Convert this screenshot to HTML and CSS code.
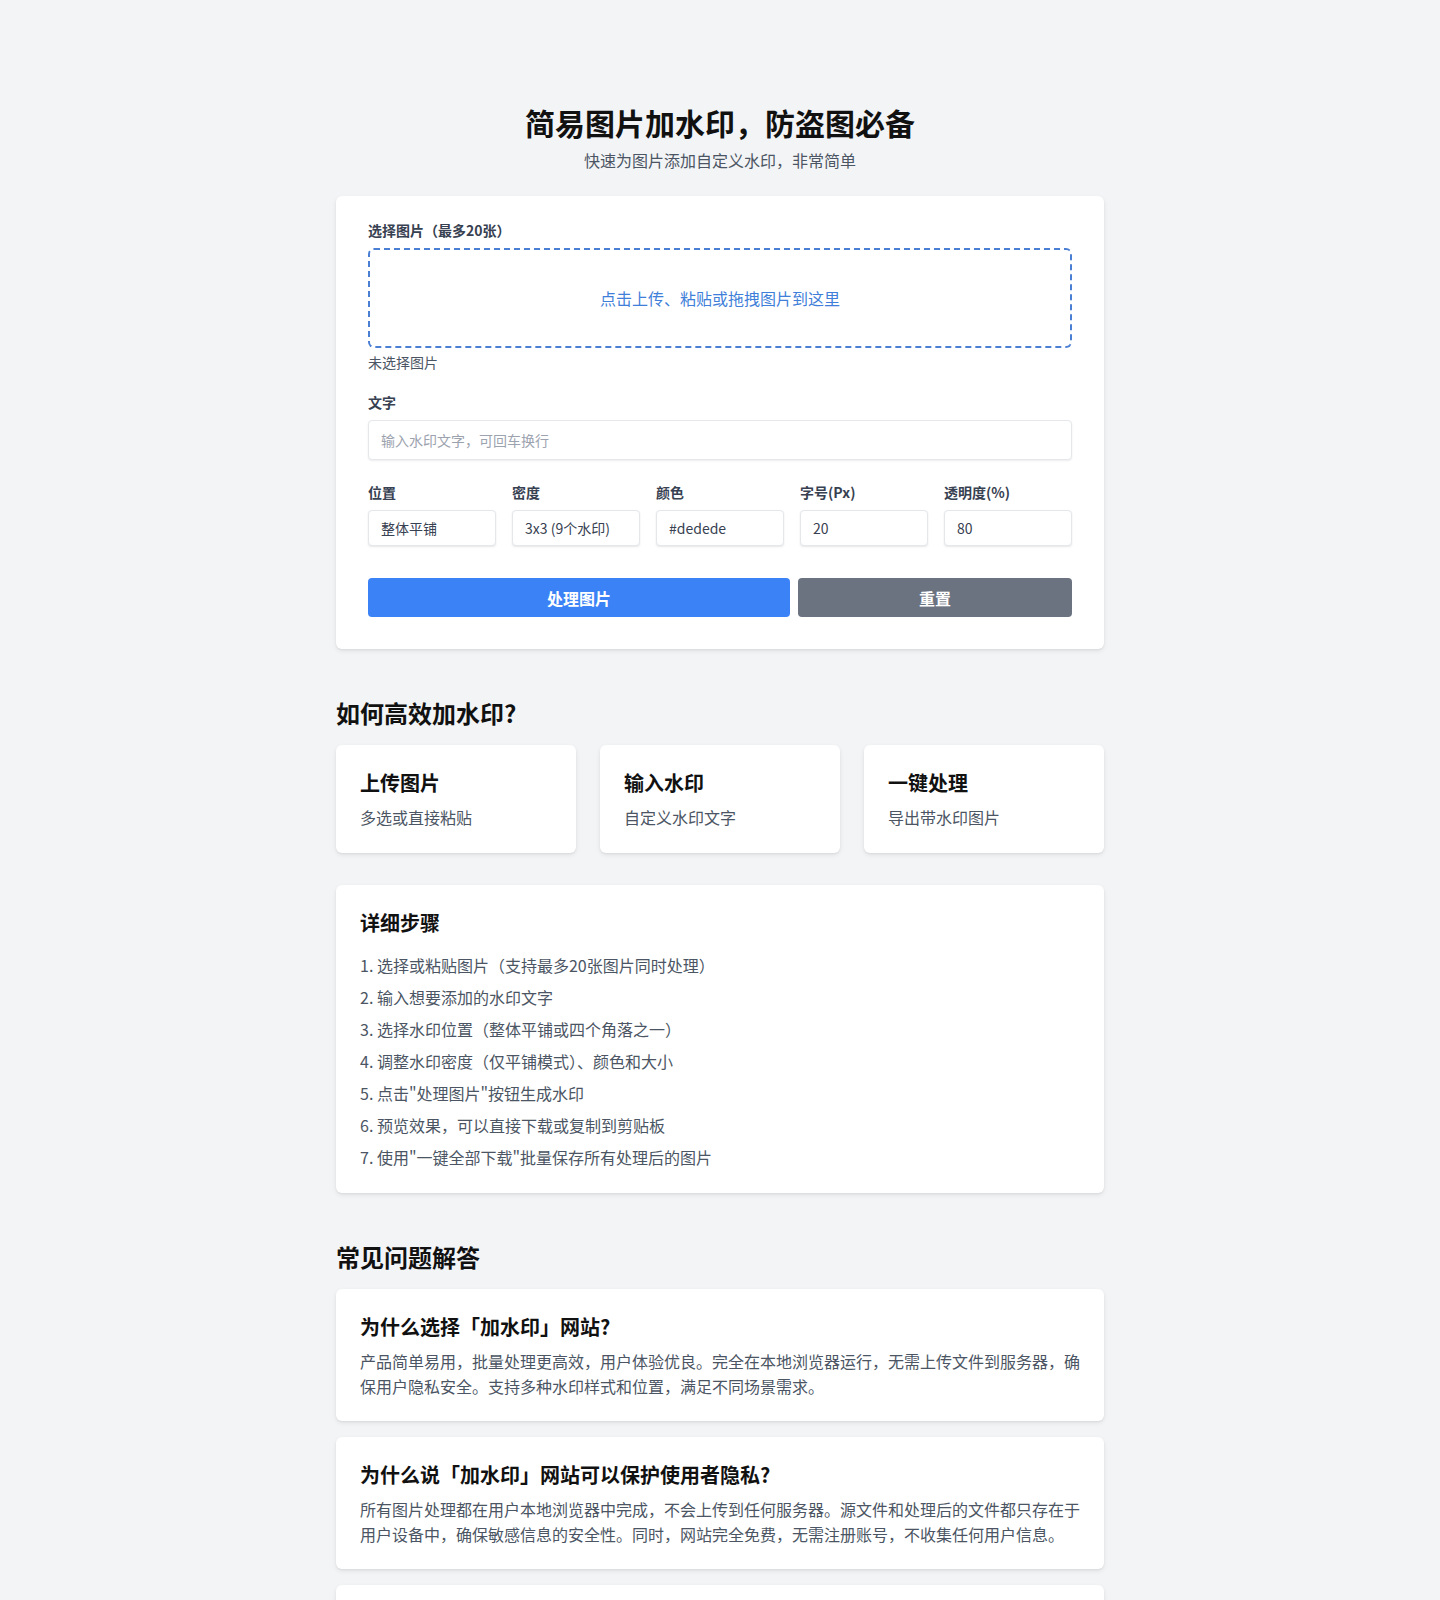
FILE: index.html
```html
<!DOCTYPE html>
<html lang="zh-CN">
<head>
<meta charset="utf-8">
<title>简易图片加水印，防盗图必备</title>
<link rel="stylesheet" href="styles.css">
</head>
<body>
<main class="page">
  <header class="hero">
    <h1 class="hero-title">简易图片加水印，防盗图必备</h1>
    <p class="hero-sub">快速为图片添加自定义水印，非常简单</p>
  </header>

  <section class="card tool">
    <label class="field-label">选择图片（最多20张）</label>
    <div class="dropzone">点击上传、粘贴或拖拽图片到这里</div>
    <p class="file-status">未选择图片</p>

    <label class="field-label text-label">文字</label>
    <input class="text-input" type="text" placeholder="输入水印文字，可回车换行">

    <div class="options">
      <div class="option">
        <label class="field-label">位置</label>
        <select class="small-input"><option>整体平铺</option></select>
      </div>
      <div class="option">
        <label class="field-label">密度</label>
        <select class="small-input"><option>3x3 (9个水印)</option></select>
      </div>
      <div class="option">
        <label class="field-label">颜色</label>
        <input class="small-input" type="text" value="#dedede">
      </div>
      <div class="option">
        <label class="field-label">字号(Px)</label>
        <input class="small-input" type="text" value="20">
      </div>
      <div class="option">
        <label class="field-label">透明度(%)</label>
        <input class="small-input" type="text" value="80">
      </div>
    </div>

    <div class="actions">
      <button class="btn btn-primary">处理图片</button>
      <button class="btn btn-secondary">重置</button>
    </div>
  </section>

  <h2 class="section-title">如何高效加水印?</h2>
  <div class="steps-grid">
    <div class="card mini">
      <h3 class="card-title">上传图片</h3>
      <p class="card-desc">多选或直接粘贴</p>
    </div>
    <div class="card mini">
      <h3 class="card-title">输入水印</h3>
      <p class="card-desc">自定义水印文字</p>
    </div>
    <div class="card mini">
      <h3 class="card-title">一键处理</h3>
      <p class="card-desc">导出带水印图片</p>
    </div>
  </div>

  <section class="card detail">
    <h3 class="card-title">详细步骤</h3>
    <ol class="step-list">
      <li>1. 选择或粘贴图片（支持最多20张图片同时处理）</li>
      <li>2. 输入想要添加的水印文字</li>
      <li>3. 选择水印位置（整体平铺或四个角落之一）</li>
      <li>4. 调整水印密度（仅平铺模式）、颜色和大小</li>
      <li>5. 点击"处理图片"按钮生成水印</li>
      <li>6. 预览效果，可以直接下载或复制到剪贴板</li>
      <li>7. 使用"一键全部下载"批量保存所有处理后的图片</li>
    </ol>
  </section>

  <h2 class="section-title">常见问题解答</h2>
  <div class="faq-list">
    <div class="card faq">
      <h3 class="card-title">为什么选择「加水印」网站?</h3>
      <p class="faq-text">产品简单易用，批量处理更高效，用户体验优良。完全在本地浏览器运行，无需上传文件到服务器，确保用户隐私安全。支持多种水印样式和位置，满足不同场景需求。</p>
    </div>
    <div class="card faq">
      <h3 class="card-title">为什么说「加水印」网站可以保护使用者隐私?</h3>
      <p class="faq-text">所有图片处理都在用户本地浏览器中完成，不会上传到任何服务器。源文件和处理后的文件都只存在于用户设备中，确保敏感信息的安全性。同时，网站完全免费，无需注册账号，不收集任何用户信息。</p>
    </div>
    <div class="card faq faq-more"></div>
  </div>
</main>
</body>
</html>
```

FILE: styles.css
```css
* { box-sizing: border-box; }

body {
  margin: 0;
  background: #f3f4f6;
  font-family: "Noto Sans CJK SC", "Noto Sans", sans-serif;
  color: #111827;
}

.page {
  width: 768px;
  margin: 0 auto;
  padding: 102px 0 40px;
}

.hero { text-align: center; }

.hero-title {
  margin: 0;
  font-size: 30px;
  line-height: 40px;
  font-weight: 700;
  color: #111;
}

.hero-sub {
  margin: 6px 0 0;
  font-size: 16px;
  line-height: 24px;
  color: #4b5563;
}

.card {
  background: #fff;
  border-radius: 6px;
  box-shadow: 0 2px 5px rgba(0, 0, 0, 0.08), 0 1px 2px rgba(0, 0, 0, 0.05);
}

.tool {
  margin-top: 24px;
  padding: 24px 32px 32px;
}

.field-label {
  display: block;
  font-size: 14px;
  line-height: 20px;
  font-weight: 700;
  color: #374151;
  margin-bottom: 8px;
}

.dropzone {
  height: 100px;
  border: 2px dashed #4a7fd4;
  border-radius: 6px;
  display: flex;
  align-items: center;
  justify-content: center;
  font-size: 16px;
  color: #3f7fd9;
}

.file-status {
  margin: 4px 0 0;
  font-size: 14px;
  line-height: 20px;
  color: #4b5563;
}

.text-label { margin-top: 20px; }

.text-input {
  display: block;
  width: 100%;
  height: 40px;
  padding: 0 12px;
  border: 1px solid #e5e7eb;
  border-radius: 4px;
  box-shadow: 0 1px 2px rgba(0, 0, 0, 0.08);
  font-family: inherit;
  font-size: 14px;
  color: #374151;
  background: #fff;
}

.text-input::placeholder { color: #9ca3af; }

.options {
  margin-top: 22px;
  display: grid;
  grid-template-columns: repeat(5, 1fr);
  gap: 16px;
}

.small-input {
  display: block;
  width: 100%;
  height: 36px;
  padding: 0 12px;
  border: 1px solid #e5e7eb;
  border-radius: 4px;
  box-shadow: 0 1px 2px rgba(0, 0, 0, 0.1);
  font-family: inherit;
  font-size: 14px;
  color: #374151;
  background: #fff;
  appearance: none;
  -webkit-appearance: none;
}

.actions {
  margin-top: 32px;
  display: flex;
  gap: 8px;
}

.btn {
  height: 39px;
  border: none;
  border-radius: 4px;
  font-family: inherit;
  font-size: 16px;
  font-weight: 700;
  color: #fff;
}

.btn-primary {
  flex: 0 0 422px;
  background: #3b82f6;
}

.btn-secondary {
  flex: 1 1 auto;
  background: #6b7280;
}

.section-title {
  margin: 48px 0 16px;
  font-size: 24px;
  line-height: 32px;
  font-weight: 700;
  color: #111;
}

.steps-grid {
  display: grid;
  grid-template-columns: repeat(3, 1fr);
  gap: 24px;
}

.mini { padding: 24px; }

.card-title {
  margin: 0;
  font-size: 20px;
  line-height: 28px;
  font-weight: 700;
  color: #111;
}

.card-desc {
  margin: 8px 0 0;
  font-size: 16px;
  line-height: 24px;
  color: #4b5563;
}

.detail {
  margin-top: 32px;
  padding: 24px;
}

.step-list {
  list-style: none;
  margin: 16px 0 0;
  padding: 0;
  display: flex;
  flex-direction: column;
  gap: 8px;
}

.step-list li {
  font-size: 16px;
  line-height: 24px;
  color: #4b5563;
}

.faq-list {
  display: flex;
  flex-direction: column;
  gap: 16px;
}

.faq { padding: 24px 24px 22px; }

.faq-more { height: 132px; }

.faq-text {
  margin: 8px 0 0;
  font-size: 16px;
  line-height: 25px;
  color: #4b5563;
}
```
